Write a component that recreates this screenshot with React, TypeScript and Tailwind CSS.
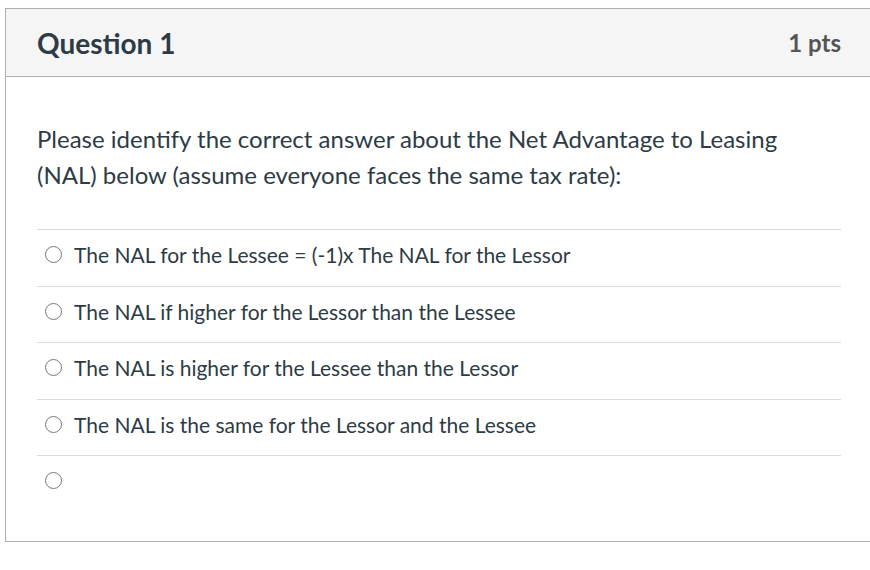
import React from "react";

const answers = [
  "The NAL for the Lessee = (-1)x The NAL for the Lessor",
  "The NAL if higher for the Lessor than the Lessee",
  "The NAL is higher for the Lessee than the Lessor",
  "The NAL is the same for the Lessor and the Lessee",
  "",
];

const App: React.FC = () => {
  return (
    <div className="min-h-[570px] bg-white pt-2 pl-[5px] overflow-hidden" style={{ fontFamily: "Lato, 'Liberation Sans', sans-serif" }}>
      <div className="w-[880px] border-t border-l border-b border-[#aeaeae]">
        <div className="h-[68px] bg-[#f5f5f5] border-b border-[#aeaeae] pl-[31px]">
          <div className="w-[804px] h-full flex items-center">
            <h2 className="flex-1 text-[28px] font-bold text-[#2d3b45]">Question 1</h2>
            <span className="text-[24px] font-bold text-[#555]">1 pts</span>
          </div>
        </div>
        <div className="pl-[31px] pt-[44px] pb-[29px]">
          <p className="w-[804px] text-[24px] leading-[36px] text-[#2d3b45]">
            Please identify the correct answer about the Net Advantage to Leasing (NAL) below (assume everyone faces the same tax rate):
          </p>
          <div className="w-[804px] mt-[36px]">
            {answers.map((a, i) => (
              <div key={i} className="h-[56.5px] border-t border-[#dcdcdc] flex items-center pl-2 pb-[6px]">
                <span className="w-[17px] h-[17px] rounded-full border-[1.5px] border-[#777] shrink-0" />
                <span className="ml-[12px] text-[21px] text-[#2d3b45]">{a}</span>
              </div>
            ))}
          </div>
        </div>
      </div>
    </div>
  );
};

export default App;
